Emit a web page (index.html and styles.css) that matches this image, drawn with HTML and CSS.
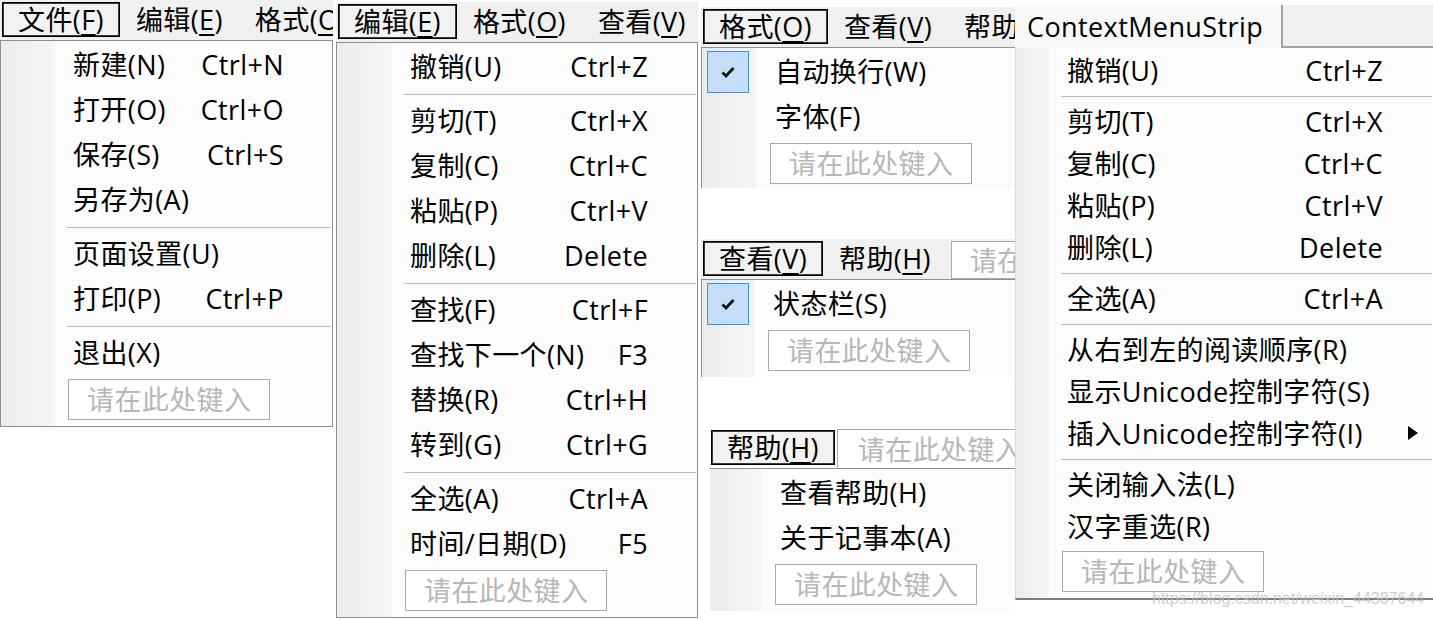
FILE: index.html
```html
<!DOCTYPE html>
<html lang="zh-CN">
<head>
<meta charset="utf-8">
<title>Notepad menus</title>
<link rel="stylesheet" href="styles.css">
</head>
<body>
<div class="canvas">

  <!-- Panel 1: 文件 -->
  <section class="panel p1">
    <div class="menubar">
      <div class="mi sel">文件(<u>F</u>)</div>
      <div class="mi">编辑(<u>E</u>)</div>
      <div class="mi">格式(<u>O</u>)</div>
    </div>
    <div class="dropdown">
      <div class="item"><span></span><span class="lbl">新建(N)</span><span class="sc">Ctrl+N</span></div>
      <div class="item"><span></span><span class="lbl">打开(O)</span><span class="sc">Ctrl+O</span></div>
      <div class="item"><span></span><span class="lbl">保存(S)</span><span class="sc">Ctrl+S</span></div>
      <div class="item"><span></span><span class="lbl">另存为(A)</span><span class="sc"></span></div>
      <div class="sep"></div>
      <div class="item"><span></span><span class="lbl">页面设置(U)</span><span class="sc"></span></div>
      <div class="item"><span></span><span class="lbl">打印(P)</span><span class="sc">Ctrl+P</span></div>
      <div class="sep"></div>
      <div class="item"><span></span><span class="lbl">退出(X)</span><span class="sc"></span></div>
      <div class="typehere">请在此处键入</div>
    </div>
  </section>

  <!-- Panel 2: 编辑 -->
  <section class="panel p2">
    <div class="menubar">
      <div class="mi sel">编辑(<u>E</u>)</div>
      <div class="mi">格式(<u>O</u>)</div>
      <div class="mi">查看(<u>V</u>)</div>
    </div>
    <div class="dropdown">
      <div class="item"><span></span><span class="lbl">撤销(U)</span><span class="sc">Ctrl+Z</span></div>
      <div class="sep"></div>
      <div class="item"><span></span><span class="lbl">剪切(T)</span><span class="sc">Ctrl+X</span></div>
      <div class="item"><span></span><span class="lbl">复制(C)</span><span class="sc">Ctrl+C</span></div>
      <div class="item"><span></span><span class="lbl">粘贴(P)</span><span class="sc">Ctrl+V</span></div>
      <div class="item"><span></span><span class="lbl">删除(L)</span><span class="sc">Delete</span></div>
      <div class="sep"></div>
      <div class="item"><span></span><span class="lbl">查找(F)</span><span class="sc">Ctrl+F</span></div>
      <div class="item"><span></span><span class="lbl">查找下一个(N)</span><span class="sc">F3</span></div>
      <div class="item"><span></span><span class="lbl">替换(R)</span><span class="sc">Ctrl+H</span></div>
      <div class="item"><span></span><span class="lbl">转到(G)</span><span class="sc">Ctrl+G</span></div>
      <div class="sep"></div>
      <div class="item"><span></span><span class="lbl">全选(A)</span><span class="sc">Ctrl+A</span></div>
      <div class="item"><span></span><span class="lbl">时间/日期(D)</span><span class="sc">F5</span></div>
      <div class="typehere">请在此处键入</div>
    </div>
  </section>

  <!-- Panel 3: 格式 -->
  <section class="panel p3">
    <div class="menubar">
      <div class="mi sel">格式(<u>O</u>)</div>
      <div class="mi">查看(<u>V</u>)</div>
      <div class="mi">帮助</div>
    </div>
    <div class="dropdown open-right open-bottom">
      <div class="item"><span class="check"><svg width="18" height="18" viewBox="0 0 18 18"><path d="M3.5 9.5 L7 13 L14.5 5" fill="none" stroke="#111" stroke-width="2.8"/></svg></span><span class="lbl">自动换行(W)</span><span class="sc"></span></div>
      <div class="item"><span></span><span class="lbl">字体(F)</span><span class="sc"></span></div>
      <div class="typehere">请在此处键入</div>
    </div>
  </section>

  <!-- Panel 4: 查看 -->
  <section class="panel p4">
    <div class="menubar">
      <div class="mi sel">查看(<u>V</u>)</div>
      <div class="mi">帮助(<u>H</u>)</div>
      <div class="typehere bar">请在</div>
    </div>
    <div class="dropdown open-bottom">
      <div class="item"><span class="check"><svg width="18" height="18" viewBox="0 0 18 18"><path d="M3.5 9.5 L7 13 L14.5 5" fill="none" stroke="#111" stroke-width="2.8"/></svg></span><span class="lbl">状态栏(S)</span><span class="sc"></span></div>
      <div class="typehere">请在此处键入</div>
    </div>
  </section>

  <!-- Panel 5: 帮助 -->
  <section class="panel p5">
    <div class="menubar white">
      <div class="mi sel">帮助(<u>H</u>)</div>
      <div class="typehere bar">请在此处键入</div>
    </div>
    <div class="dropdown open-right open-bottom open-left">
      <div class="item"><span></span><span class="lbl">查看帮助(H)</span><span class="sc"></span></div>
      <div class="item"><span></span><span class="lbl">关于记事本(A)</span><span class="sc"></span></div>
      <div class="typehere">请在此处键入</div>
    </div>
  </section>

  <!-- Panel 6: ContextMenuStrip -->
  <section class="panel p6">
    <div class="ctx-head">
      <div class="ctx-tab">ContextMenuStrip</div>
      <div class="ctx-rest"></div>
    </div>
    <div class="dropdown ctx">
      <div class="item"><span></span><span class="lbl">撤销(U)</span><span class="sc">Ctrl+Z</span></div>
      <div class="sep"></div>
      <div class="item"><span></span><span class="lbl">剪切(T)</span><span class="sc">Ctrl+X</span></div>
      <div class="item"><span></span><span class="lbl">复制(C)</span><span class="sc">Ctrl+C</span></div>
      <div class="item"><span></span><span class="lbl">粘贴(P)</span><span class="sc">Ctrl+V</span></div>
      <div class="item"><span></span><span class="lbl">删除(L)</span><span class="sc">Delete</span></div>
      <div class="sep"></div>
      <div class="item"><span></span><span class="lbl">全选(A)</span><span class="sc">Ctrl+A</span></div>
      <div class="sep"></div>
      <div class="item"><span></span><span class="lbl">从右到左的阅读顺序(R)</span><span class="sc"></span></div>
      <div class="item"><span></span><span class="lbl">显示Unicode控制字符(S)</span><span class="sc"></span></div>
      <div class="item has-sub"><span></span><span class="lbl">插入Unicode控制字符(I)</span><span class="sc"><svg class="arrow" width="10" height="14" viewBox="0 0 10 14"><polygon points="0,0 10,7 0,14" fill="#000"/></svg></span></div>
      <div class="sep"></div>
      <div class="item"><span></span><span class="lbl">关闭输入法(L)</span><span class="sc"></span></div>
      <div class="item"><span></span><span class="lbl">汉字重选(R)</span><span class="sc"></span></div>
      <div class="typehere">请在此处键入</div>
    </div>
  </section>

  <div class="watermark">https://blog.csdn.net/weixin_44387644</div>
</div>
</body>
</html>
```

FILE: styles.css
```css
html, body {
  margin: 0;
  padding: 0;
  background: #ffffff;
}

.canvas {
  position: relative;
  width: 1433px;
  height: 620px;
  overflow: hidden;
  background: #ffffff;
  font-family: "Open Sans", "Noto Sans CJK SC", sans-serif;
  font-size: 27px;
  letter-spacing: 0.4px;
  color: #000;
}

/* each screenshot fragment sits at its own place on the collage */
.panel {
  position: absolute;
  overflow: hidden;
  display: flex;
  flex-direction: column;
  --mw: 54px;
  --sr: 49px;
}
.p1 { left: 0;     top: 0;   width: 333px; height: 430px; --mw: 54px; --sr: 48px; }
.p2 { left: 336px; top: 2px; width: 362px; height: 618px; --mw: 55px; --sr: 49px; }
.p3 { left: 701px; top: 7px; width: 314px; height: 181px; --mw: 55px; }
.p4 { left: 701px; top: 239px; width: 315px; height: 139px; --mw: 53px; }
.p5 { left: 709px; top: 428px; width: 306px; height: 183px; --mw: 52px; }
.p6 { left: 1015px; top: 5px; width: 418px; height: 596px; --mw: 33px; --sr: 50px; }

/* menu bar */
.menubar {
  display: flex;
  align-items: flex-start;
  height: 40px;
  padding: 2px 0 0 2px;
  box-sizing: border-box;
  background: #f0f0f0;
  white-space: nowrap;
  flex: none;
}
.menubar.white {
  background: #ffffff;
}
.mi {
  height: 35px;
  padding: 0 16px;
  display: flex;
  align-items: center;
  flex: none;
  line-height: 1;
}
.mi u {
  text-decoration: underline;
  text-decoration-thickness: 2px;
  text-underline-offset: 4px;
}
.mi.sel {
  box-shadow: inset 0 0 0 1px #000, inset 0 0 0 2px #3a3a3a;
  background: #f2f2f2;
}

/* dropdown */
.dropdown {
  border: 1px solid #8f8f8f;
  padding-top: 1px;
  background:
    linear-gradient(to right, #ececec, #f6f6f6) 0 0 / var(--mw) 100% no-repeat,
    #fcfcfc;
  flex: none;
}
.dropdown.open-right { border-right: none; }
.dropdown.open-bottom { border-bottom: none; }
.dropdown.open-left { border-left: 1px solid #fcfcfc; }

.item {
  display: grid;
  grid-template-columns: var(--mw) 1fr auto;
  align-items: center;
  height: 45px;
  padding-right: var(--sr);
  white-space: nowrap;
  line-height: 1;
}
.item .lbl {
  padding-left: 18px;
}
.item .sc {
  text-align: right;
}

.check {
  width: 42px;
  height: 42px;
  margin-left: 5px;
  box-sizing: border-box;
  border: 1px solid #3b8fe3;
  background: #c3def6;
  display: flex;
  align-items: center;
  justify-content: center;
}

.sep {
  height: 9px;
  margin-left: calc(var(--mw) + 12px);
  margin-right: 1px;
  background: linear-gradient(#bdbdbd, #bdbdbd) 0 5px / 100% 1px no-repeat;
}

.typehere {
  width: 202px;
  height: 41px;
  margin: 4px 0 6px calc(var(--mw) + 13px);
  box-sizing: border-box;
  border: 1px solid #a9a9a9;
  background: #fff;
  color: #b7b7b7;
  padding-left: 18px;
  display: flex;
  align-items: center;
  white-space: nowrap;
  line-height: 1;
  overflow: hidden;
}
.typehere.bar {
  margin: 0 0 0 4px;
  height: 38px;
  width: 70px;
  flex: none;
  border-right: none;
}
.p5 .typehere.bar {
  margin-left: 2px;
  width: 184px;
  height: 40px;
  margin-top: -1px;
  padding-left: 20px;
}

/* context menu strip */
.ctx-head {
  display: flex;
  height: 43px;
  flex: none;
}
.ctx-tab {
  width: 266px;
  padding-left: 12px;
  box-sizing: border-box;
  background: #f8f8f8;
  display: flex;
  align-items: center;
  line-height: 1;
  white-space: nowrap;
}
.ctx-rest {
  flex: 1;
  background: #f0f0f0;
  border-left: 2px solid #a3a3a3;
  border-bottom: 2px solid #a3a3a3;
}
.dropdown.ctx {
  border: none;
  border-left: 1px solid #dadada;
  border-bottom: 2px solid #7d7d7d;
}
.ctx .item {
  height: 42px;
}
.ctx .item.has-sub {
  padding-right: 15px;
}
.arrow {
  display: block;
  margin-left: auto;
}

.watermark {
  position: absolute;
  left: 1152px;
  top: 590px;
  font-family: "Liberation Sans", Arial, sans-serif;
  font-size: 16px;
  letter-spacing: 0;
  color: rgba(190, 190, 190, 0.75);
  white-space: nowrap;
}
```
